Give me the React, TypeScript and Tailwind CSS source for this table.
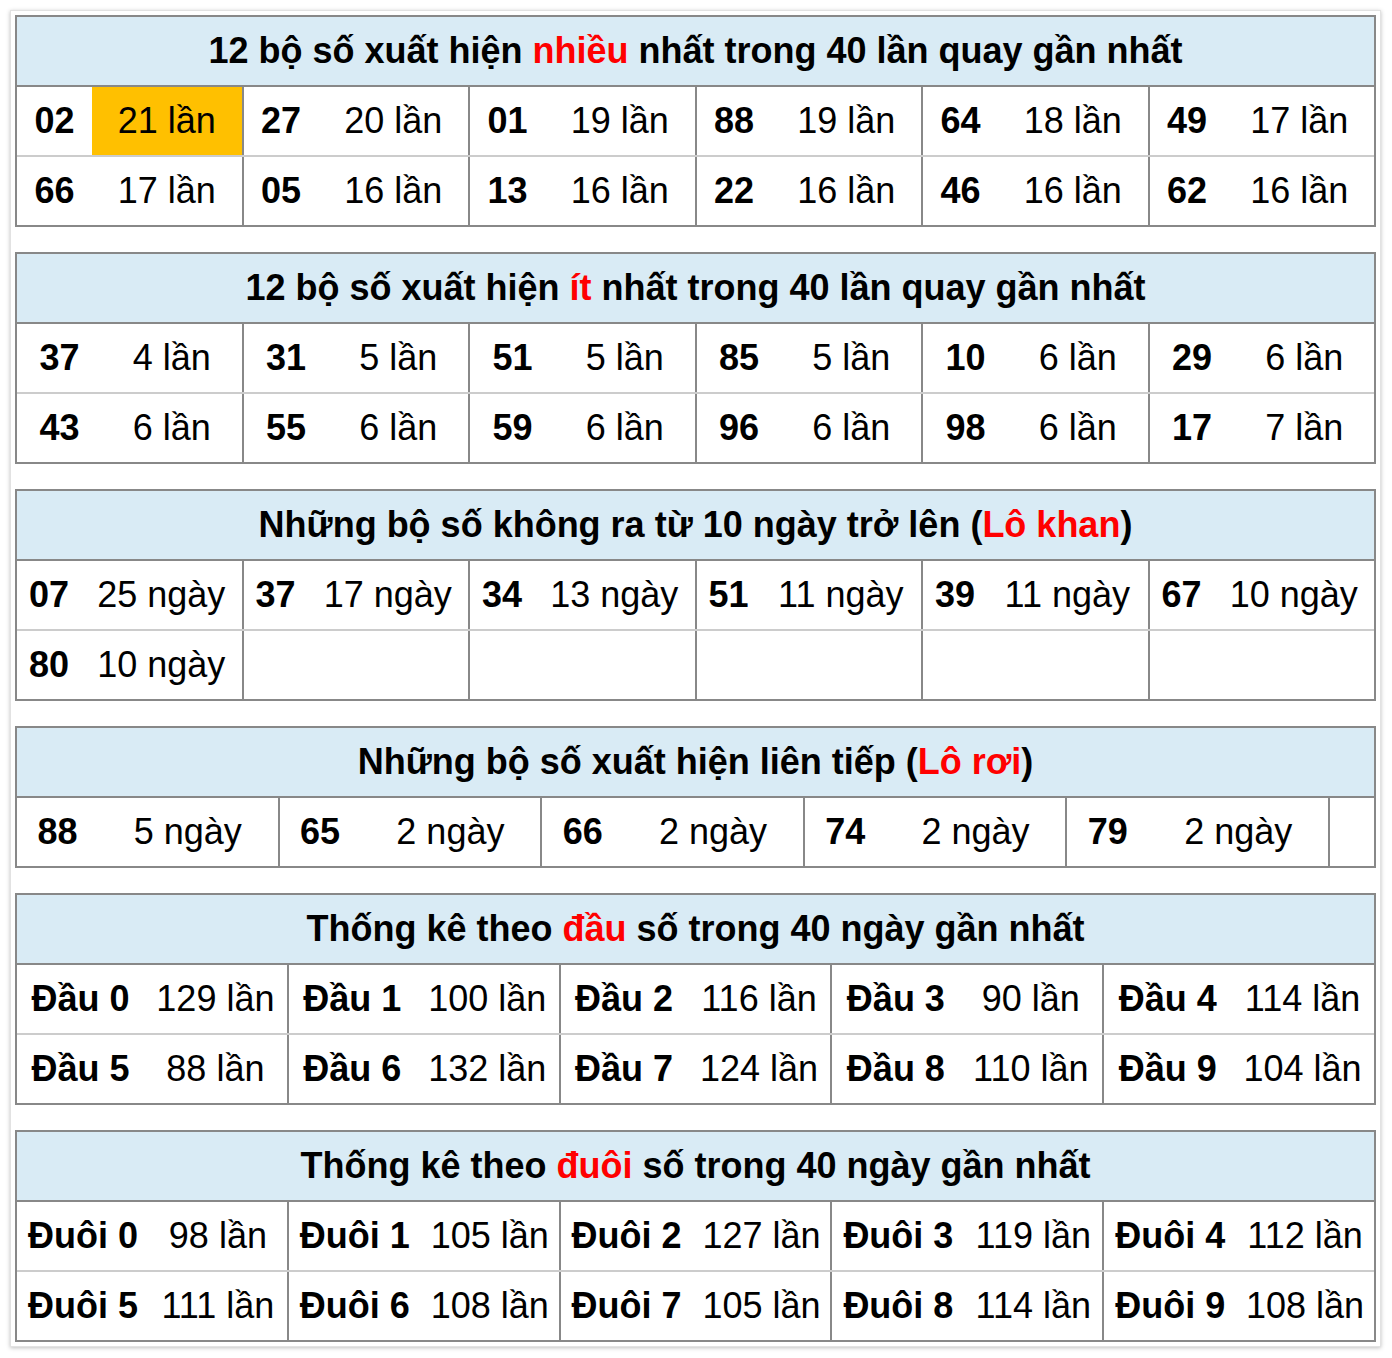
import React from "react";

type Cell = { n: string; v: string; hl?: boolean } | null;

interface StatTableProps {
  title: React.ReactNode;
  rows: Cell[][];
  numW: string;
  tail?: boolean;
}

const Red = ({ children }: { children: React.ReactNode }) => (
  <span className="text-[#ff0000]">{children}</span>
);

const StatTable = ({ title, rows, numW, tail }: StatTableProps) => {
  return (
    <div className="border-2 border-[#888888]">
      <div className="h-[70px] flex items-center justify-center bg-[#d9ebf5] border-b-2 border-[#888888] text-[36px] font-bold leading-none">
        {title}
      </div>
      {rows.map((row, ri) => (
        <div
          key={ri}
          className={`flex h-[68px] ${ri > 0 ? "box-content border-t-2 border-[#cccccc]" : ""}`}
        >
          {row.map((cell, ci) => (
            <div
              key={ci}
              className={`flex flex-1 min-w-0 ${ci > 0 ? "border-l-2 border-[#888888]" : ""}`}
            >
              {cell && (
                <>
                  <div className={`${numW} shrink-0 flex items-center justify-center font-bold`}>
                    {cell.n}
                  </div>
                  <div
                    className={`flex-1 flex items-center justify-center whitespace-nowrap ${
                      cell.hl ? "bg-[#ffc000]" : ""
                    }`}
                  >
                    {cell.v}
                  </div>
                </>
              )}
            </div>
          ))}
          {tail && <div className="w-[46px] shrink-0 border-l-2 border-[#888888]" />}
        </div>
      ))}
    </div>
  );
};

const lan = (n: number) => `${n} lần`;
const ngay = (n: number) => `${n} ngày`;

const App = () => {
  const most: Cell[][] = [
    [
      { n: "02", v: lan(21), hl: true },
      { n: "27", v: lan(20) },
      { n: "01", v: lan(19) },
      { n: "88", v: lan(19) },
      { n: "64", v: lan(18) },
      { n: "49", v: lan(17) },
    ],
    [
      { n: "66", v: lan(17) },
      { n: "05", v: lan(16) },
      { n: "13", v: lan(16) },
      { n: "22", v: lan(16) },
      { n: "46", v: lan(16) },
      { n: "62", v: lan(16) },
    ],
  ];

  const least: Cell[][] = [
    [
      { n: "37", v: lan(4) },
      { n: "31", v: lan(5) },
      { n: "51", v: lan(5) },
      { n: "85", v: lan(5) },
      { n: "10", v: lan(6) },
      { n: "29", v: lan(6) },
    ],
    [
      { n: "43", v: lan(6) },
      { n: "55", v: lan(6) },
      { n: "59", v: lan(6) },
      { n: "96", v: lan(6) },
      { n: "98", v: lan(6) },
      { n: "17", v: lan(7) },
    ],
  ];

  const khan: Cell[][] = [
    [
      { n: "07", v: ngay(25) },
      { n: "37", v: ngay(17) },
      { n: "34", v: ngay(13) },
      { n: "51", v: ngay(11) },
      { n: "39", v: ngay(11) },
      { n: "67", v: ngay(10) },
    ],
    [{ n: "80", v: ngay(10) }, null, null, null, null, null],
  ];

  const roi: Cell[][] = [
    [
      { n: "88", v: ngay(5) },
      { n: "65", v: ngay(2) },
      { n: "66", v: ngay(2) },
      { n: "74", v: ngay(2) },
      { n: "79", v: ngay(2) },
    ],
  ];

  const dau = [129, 100, 116, 90, 114, 88, 132, 124, 110, 104];
  const duoi = [98, 105, 127, 119, 112, 111, 108, 105, 114, 108];

  const split = (label: string, vals: number[]): Cell[][] => [
    vals.slice(0, 5).map((v, i) => ({ n: `${label} ${i}`, v: lan(v) })),
    vals.slice(5).map((v, i) => ({ n: `${label} ${i + 5}`, v: lan(v) })),
  ];

  return (
    <div className="min-h-screen bg-white pt-[10px] pl-[10px] font-['Liberation_Sans',Arial,sans-serif] text-[36px] text-black">
      <div className="w-[1371px] border border-[#e2e2e2] bg-white p-[4px] shadow-[0_1px_4px_rgba(0,0,0,0.25)]">
        <div className="flex flex-col gap-[25px]">
          <StatTable
            title={
              <span>
                12 bộ số xuất hiện <Red>nhiều</Red> nhất trong 40 lần quay gần nhất
              </span>
            }
            rows={most}
            numW="w-[75px]"
          />
          <StatTable
            title={
              <span>
                12 bộ số xuất hiện <Red>ít</Red> nhất trong 40 lần quay gần nhất
              </span>
            }
            rows={least}
            numW="w-[85px]"
          />
          <StatTable
            title={
              <span>
                Những bộ số không ra từ 10 ngày trở lên (<Red>Lô khan</Red>)
              </span>
            }
            rows={khan}
            numW="w-[64px]"
          />
          <StatTable
            title={
              <span>
                Những bộ số xuất hiện liên tiếp (<Red>Lô rơi</Red>)
              </span>
            }
            rows={roi}
            numW="w-[81px]"
            tail
          />
          <StatTable
            title={
              <span>
                Thống kê theo <Red>đầu</Red> số trong 40 ngày gần nhất
              </span>
            }
            rows={split("Đầu", dau)}
            numW="w-[127px]"
          />
          <StatTable
            title={
              <span>
                Thống kê theo <Red>đuôi</Red> số trong 40 ngày gần nhất
              </span>
            }
            rows={split("Đuôi", duoi)}
            numW="w-[132px]"
          />
        </div>
      </div>
    </div>
  );
};

export default App;
